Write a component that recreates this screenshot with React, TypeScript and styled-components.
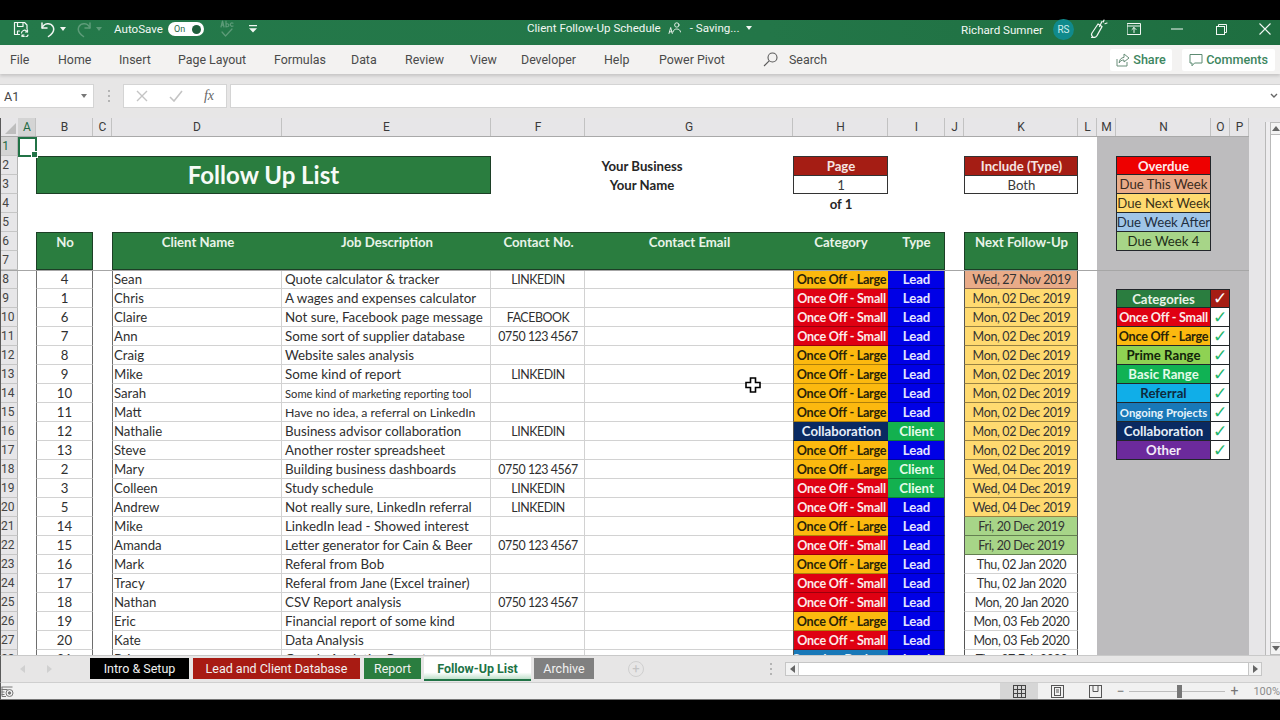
import React from "react";
import styled, { createGlobalStyle, css } from "styled-components";

const Global = createGlobalStyle`
  html, body { margin: 0; padding: 0; background: #000; }
  #root { width: 1280px; height: 720px; }
  * { box-sizing: border-box; }
`;

const CHROME = `Roboto, "Liberation Sans", sans-serif`;
const SHEET = `Lato, "Liberation Sans", sans-serif`;
const COLS = "17px 18px 57px 19px 170px 209px 94px 208px 95px 57px 19px 114px 19px 19px 95px 19px 19px";

const Window = styled.div`
  position: relative;
  width: 1280px;
  height: 720px;
  overflow: hidden;
  background: #000;
  display: flex;
  flex-direction: column;
  font-family: ${CHROME};
`;
const Letterbox = styled.div<{ $h: number }>`
  flex: 0 0 ${(p) => p.$h}px;
  background: #000;
`;

/* ---------- title bar ---------- */
const TitleBar = styled.header`
  flex: 0 0 25px;
  min-height: 0;
  display: flex;
  align-items: center;
  padding: 0 9px 7px 0;
  color: #f2f7f3;
  font-size: 11.6px;
  background: linear-gradient(90deg, #24794a 0%, #237648 60%, #1e6e40 100%);
`;
const TitleLeft = styled.div`
  flex: 0 0 527px;
  height: 18px;
  display: flex;
  align-items: center;
`;
const TitleMiddle = styled.div`
  display: flex;
  align-items: center;
  white-space: nowrap;
  transform: translateY(-1px);
`;
const TitleRight = styled.div`
  margin-left: auto;
  height: 18px;
  display: flex;
  align-items: center;
  white-space: nowrap;
`;
const UserName = styled.span`
  transform: translateY(1px);
`;
const Spot = styled.span<{ $ml: number; $w?: number; $faded?: boolean }>`
  display: inline-flex;
  align-items: center;
  margin-left: ${(p) => p.$ml}px;
  ${(p) => (p.$w ? `flex: 0 0 ${p.$w}px; width: ${p.$w}px;` : "")}
  opacity: ${(p) => (p.$faded ? 0.28 : 1)};
`;
const Toggle = styled.span`
  margin-left: 7px;
  width: 36px;
  height: 14px;
  border-radius: 7px;
  background: #fff;
  display: flex;
  align-items: center;
  justify-content: space-between;
  padding: 0 3px 0 6px;
  color: #2c6b48;
  font-size: 9px;
`;
const Knob = styled.span`
  width: 9px;
  height: 9px;
  border-radius: 50%;
  background: #1f5f3c;
`;
const Avatar = styled.span`
  flex: 0 0 21px;
  margin-left: 10px;
  width: 21px;
  height: 21px;
  border-radius: 50%;
  background: #108a8c;
  color: #cfeeee;
  font-size: 10px;
  display: flex;
  align-items: center;
  justify-content: center;
`;

/* ---------- ribbon tabs ---------- */
const Ribbon = styled.nav`
  flex: 0 0 29px;
  background: #f3f2f1;
  display: flex;
  align-items: center;
  padding-left: 10px;
  color: #4a4a4a;
  font-size: 12.4px;
  box-shadow: 0 2px 3px rgba(0, 0, 0, 0.15);
  z-index: 2;
`;
const RibbonTab = styled.span<{ $w: number }>`
  flex: 0 0 ${(p) => p.$w}px;
  white-space: nowrap;
`;
const SearchIcon = styled.span`
  display: flex;
  flex: 0 0 26px;
`;
const RibbonRight = styled.div`
  margin-left: auto;
  display: flex;
  gap: 10px;
  padding-right: 5px;
`;
const RibbonButton = styled.span<{ $w: number }>`
  width: ${(p) => p.$w}px;
  height: 22px;
  background: #fff;
  border-radius: 2px;
  display: flex;
  align-items: center;
  justify-content: center;
  gap: 3px;
  color: #3d8660;
  font-size: 12.6px;
  font-weight: 500;
`;

/* ---------- formula bar ---------- */
const FormulaBar = styled.div`
  flex: 0 0 44px;
  background: #e7e6e6;
  display: flex;
  align-items: center;
`;
const Field = styled.div`
  height: 24px;
  background: #fff;
  border: 1px solid #d4d4d4;
  display: flex;
  align-items: center;
  color: #444;
`;
const NameBox = styled(Field)`
  flex: 0 0 94px;
  justify-content: space-between;
  padding: 0 6px 0 4px;
  font-size: 12.5px;
  border-left: 0;
`;
const Grip = styled.span`
  flex: 0 0 29px;
  display: flex;
  justify-content: center;
`;
const FxBox = styled(Field)`
  flex: 0 0 104px;
  justify-content: space-between;
  padding: 0 12px;
`;
const FxText = styled.span`
  font-family: "Liberation Serif", serif;
  font-style: italic;
  font-size: 14px;
  color: #666;
`;
const FormulaInput = styled(Field)`
  margin-left: 3px;
  flex: 1;
  justify-content: flex-end;
  padding-right: 2px;
  border-right: 0;
`;

/* ---------- sheet ---------- */
const Body = styled.div`
  flex: 0 0 537px;
  display: flex;
  background: #e7e6e8;
  border-left: 1px solid #5a5a5a;
  overflow: hidden;
`;
const SheetColumn = styled.div`
  flex: 0 0 1248px;
  display: flex;
  flex-direction: column;
  min-height: 0;
`;
const ColHeaders = styled.div`
  flex: 0 0 19px;
  display: grid;
  grid-template-columns: ${COLS};
  background: #e7e6e8;
  border-bottom: 1px solid #a9a9a9;
`;
const ColHead = styled.div<{ $on?: boolean }>`
  display: flex;
  align-items: center;
  justify-content: center;
  padding-left: 1px;
  font-size: 12px;
  color: ${(p) => (p.$on ? "#1f6b43" : "#3a3a3a")};
  background: ${(p) => (p.$on ? "#d4d4d4" : "transparent")};
  border-right: 1px solid #c2c2c2;
`;
const Corner = styled.div`
  display: flex;
  align-items: flex-end;
  justify-content: flex-end;
  padding: 0 2px 2px 0;
`;
const Sheet = styled.div`
  flex: 1;
  min-height: 0;
  display: grid;
  grid-template-columns: ${COLS};
  grid-template-rows: repeat(28, 19px);
  background: #fff;
  overflow: hidden;
  font-family: ${SHEET};
  font-size: 13.2px;
  color: #2f2f2f;
`;
const at = css<{ $r: number; $c: number; $rs?: number; $cs?: number }>`
  grid-row: ${(p) => p.$r} / span ${(p) => p.$rs ?? 1};
  grid-column: ${(p) => p.$c} / span ${(p) => p.$cs ?? 1};
`;
type At = { $r: number; $c: number; $rs?: number; $cs?: number };

const RowHead = styled.div<{ $r: number; $on?: boolean }>`
  grid-row: ${(p) => p.$r};
  grid-column: 1;
  background: ${(p) => (p.$on ? "#d4d4d4" : "#e7e6e8")};
  border-bottom: 1px solid #c6c6c6;
  border-right: 1px solid #b4b4b4;
  font-family: ${CHROME};
  font-size: 12px;
  color: ${(p) => (p.$on ? "#1f6b43" : "#444")};
  line-height: 18px;
  text-align: center;
  padding-right: 7px;
  white-space: nowrap;
`;
const Selection = styled.div`
  grid-row: 1;
  grid-column: 2;
  position: relative;
  z-index: 2;
  margin: 0 -1px -1px 0;
  border: 2px solid #217346;
  &::after {
    content: "";
    position: absolute;
    right: -3px;
    bottom: -3px;
    width: 5px;
    height: 5px;
    background: #217346;
    border: 1px solid #fff;
  }
`;
const Panel = styled.div`
  grid-row: 1 / span 28;
  grid-column: 14 / span 4;
  background: #bdbcbe;
`;
const FreezeLine = styled.div`
  grid-row: 8;
  grid-column: 1 / -1;
  align-self: start;
  height: 1px;
  background: #a6a6a6;
  z-index: 3;
`;
const Banner = styled.div`
  grid-row: 2 / span 2;
  grid-column: 3 / span 4;
  background: #2a7d3f;
  border: 1px solid #1c3f26;
  color: #f7fbf7;
  font-size: 24px;
  font-weight: 700;
  display: flex;
  align-items: center;
  justify-content: center;
  z-index: 1;
  padding-bottom: 1px;
`;
const BusinessLine = styled.div<{ $r: number }>`
  grid-row: ${(p) => p.$r};
  grid-column: 7 / span 2;
  font-weight: 700;
  color: #262626;
  display: flex;
  align-items: center;
  justify-content: center;
`;
const BoxHead = styled.div<At>`
  ${at}
  background: #a51d14;
  color: #f6e4e2;
  font-weight: 700;
  border: 1px solid #333;
  border-bottom: 0;
  display: flex;
  align-items: center;
  justify-content: center;
  padding-left: 1px;
`;
const BoxValue = styled.div<At>`
  ${at}
  background: #fff;
  color: #3a3a3a;
  border: 1px solid #333;
  display: flex;
  align-items: center;
  justify-content: center;
  padding-left: 1px;
`;
const PageOf = styled.div`
  grid-row: 4;
  grid-column: 9;
  font-weight: 700;
  color: #262626;
  display: flex;
  align-items: center;
  justify-content: center;
  padding-left: 1px;
`;
const HeadCell = styled.div<At & { $left?: boolean; $right?: boolean }>`
  ${at}
  background: #2a7d3f;
  color: #e8f3e8;
  font-weight: 700;
  text-align: center;
  line-height: 18px;
  padding-left: 1px;
  border-top: 1px solid #1c3f26;
  border-bottom: 1px solid #1c3f26;
  border-left: ${(p) => (p.$left ? "1px solid #1c3f26" : "0")};
  border-right: ${(p) => (p.$right ? "1px solid #1c3f26" : "0")};
`;
const base = css<{ $r: number }>`
  grid-row: ${(p) => p.$r};
  display: flex;
  align-items: center;
  white-space: nowrap;
  overflow: hidden;
  border-bottom: 1px solid #d2d2d2;
`;
const NoCell = styled.div<{ $r: number }>`
  ${base}
  grid-column: 3;
  justify-content: center;
  border-left: 1px solid #6e6e6e;
  border-right: 1px solid #6e6e6e;
`;
const NameCell = styled.div<{ $r: number }>`
  ${base}
  grid-column: 5;
  padding-left: 1px;
  border-left: 1px solid #6e6e6e;
  border-right: 1px solid #d2d2d2;
`;
const JobCell = styled.div<{ $r: number; $size?: number }>`
  ${base}
  grid-column: 6;
  padding-left: 3px;
  border-right: 1px solid #d2d2d2;
  font-size: ${(p) => p.$size ?? 13.35}px;
`;
const ContactCell = styled.div<{ $r: number }>`
  ${base}
  grid-column: 7;
  justify-content: center;
  padding-left: 1px;
  font-size: 12.4px;
  letter-spacing: -0.45px;
  border-right: 1px solid #d2d2d2;
`;
const EmailCell = styled.div<{ $r: number }>`
  ${base}
  grid-column: 8;
`;
const fills: Record<string, { bg: string; fg: string }> = {
  small: { bg: "#df0012", fg: "#fbeaea" },
  large: { bg: "#fcb90f", fg: "#2a2408" },
  collab: { bg: "#0a2a62", fg: "#e6eef8" },
  ongoing: { bg: "#1878b8", fg: "#e6f3fb" },
  prime: { bg: "#8fd253", fg: "#12240a" },
  basic: { bg: "#10b254", fg: "#e4fbe9" },
  referral: { bg: "#10aee8", fg: "#0e2a3e" },
  other: { bg: "#6c2a9c", fg: "#f3eaf8" },
  lead: { bg: "#0000e6", fg: "#e6e6ff" },
  client: { bg: "#13b14f", fg: "#e4fbe9" },
};
const onceOff = css`
  font-size: 12.6px;
  letter-spacing: -0.25px;
`;
const FilledCell = styled.div<{ $r: number; $k: string }>`
  ${base}
  justify-content: center;
  padding-left: 1px;
  font-weight: 700;
  background: ${(p) => fills[p.$k].bg};
  color: ${(p) => fills[p.$k].fg};
  border-bottom: 1px solid rgba(0, 0, 0, 0.3);
  ${(p) => (p.$k === "small" || p.$k === "large" ? onceOff : "")}
`;
const CategoryCell = styled(FilledCell)`
  grid-column: 9;
  border-left: 1px solid #555;
`;
const TypeCell = styled(FilledCell)`
  grid-column: 10;
  border-right: 1px solid #555;
`;
const dateFill: Record<string, string> = {
  orange: "#e9ab88",
  yellow: "#ffda70",
  green: "#a7d588",
  white: "#ffffff",
};
const DateCell = styled.div<{ $r: number; $k: string }>`
  ${base}
  grid-column: 12;
  justify-content: center;
  padding-left: 1px;
  font-size: 12.5px;
  letter-spacing: -0.35px;
  background: ${(p) => dateFill[p.$k]};
  color: #333;
  border-left: 1px solid #555;
  border-right: 1px solid #555;
  border-bottom: 1px solid ${(p) => (p.$k === "white" ? "#d2d2d2" : "rgba(0,0,0,.4)")};
`;
const LegendCell = styled.div<{ $r: number; $bg: string; $fg: string; $bold?: boolean; $k?: string; $head?: boolean }>`
  grid-row: ${(p) => p.$r};
  grid-column: 15;
  z-index: 1;
  background: ${(p) => p.$bg};
  color: ${(p) => p.$fg};
  font-weight: ${(p) => (p.$bold ? 700 : 400)};
  white-space: nowrap;
  display: flex;
  align-items: center;
  justify-content: center;
  border: 1px solid #22262a;
  border-top: ${(p) => (p.$head ? "1px solid #22262a" : "0")};
  ${(p) => (p.$k === "small" || p.$k === "large" ? onceOff : "")}
  ${(p) => (p.$k === "ongoing" ? "font-size: 11.4px;" : "")}
`;
const TickCell = styled.div<{ $r: number; $head?: boolean }>`
  grid-row: ${(p) => p.$r};
  grid-column: 16;
  z-index: 1;
  background: ${(p) => (p.$head ? "#a51d14" : "#fff")};
  color: ${(p) => (p.$head ? "#fff" : "#1fb56d")};
  font-family: "DejaVu Sans", sans-serif;
  font-size: 17px;
  font-weight: 700;
  line-height: 1;
  display: flex;
  align-items: center;
  justify-content: center;
  overflow: hidden;
  border-right: 1px solid #22262a;
  border-bottom: 1px solid #22262a;
  border-top: ${(p) => (p.$head ? "1px solid #22262a" : "0")};
`;

/* ---------- vertical scrollbar ---------- */
const VScroll = styled.div`
  flex: 1;
  padding: 4px 0 0 17px;
  display: flex;
  flex-direction: column;
  background: #e7e6e8;
`;
const VTrack = styled.div`
  flex: 1;
  margin-left: 4px;
  background: #fff;
  border-left: 1px solid #b9b9b9;
  box-shadow: -4px 0 0 #eeedef, -5px 0 0 #b9b9b9;
  display: flex;
  flex-direction: column;
  justify-content: space-between;
  align-items: center;
`;
const VArrow = styled.div`
  width: 100%;
  height: 13px;
  background: #f3f3f3;
  border-bottom: 1px solid #bbb;
  border-top: 1px solid #bbb;
  display: flex;
  align-items: center;
  justify-content: center;
`;

/* ---------- sheet tabs ---------- */
const TabBar = styled.div`
  flex: 0 0 27px;
  display: flex;
  align-items: center;
  background: #e7e6e6;
  border-top: 1px solid #c9c9c9;
  border-left: 1px solid #5a5a5a;
  padding: 0 0 1px 19px;
`;
const NavArrow = styled.span<{ $w: number }>`
  flex: 0 0 ${(p) => p.$w}px;
  display: flex;
`;
const Tab = styled.span<{ $w: number; $bg: string }>`
  flex: 0 0 ${(p) => p.$w}px;
  height: 21px;
  margin-right: 4px;
  background: ${(p) => p.$bg};
  color: #f1f1f1;
  font-size: 12.5px;
  display: flex;
  align-items: center;
  justify-content: center;
  white-space: nowrap;
`;
const ActiveTab = styled.span`
  flex: 0 0 107px;
  height: 24px;
  margin: 1px 3px 0 -1px;
  background: linear-gradient(180deg, #fff 70%, #bfe0cb 100%);
  border-bottom: 2px solid #217346;
  color: #217346;
  font-weight: 700;
  font-size: 12.5px;
  display: flex;
  align-items: center;
  justify-content: center;
  white-space: nowrap;
`;
const AddSheet = styled.span`
  margin-left: 30px;
  width: 16px;
  height: 16px;
  border-radius: 50%;
  border: 1px solid #cfcfcf;
  color: #c4c4c4;
  font-size: 13px;
  line-height: 13px;
  text-align: center;
`;
const TabGrip = styled.span`
  margin-left: 126px;
  width: 15px;
  display: flex;
`;
const HScroll = styled.div`
  flex: 0 0 477px;
  height: 14px;
  display: flex;
  background: #fff;
  border: 1px solid #c6c6c6;
`;
const HButton = styled.span`
  flex: 0 0 12px;
  background: #f3f3f3;
  display: flex;
  align-items: center;
  justify-content: center;
`;
const HTrack = styled.span`
  flex: 1;
  background: #fff;
  border-left: 1px solid #c6c6c6;
  border-right: 1px solid #c6c6c6;
`;

/* ---------- status bar ---------- */
const StatusBar = styled.footer`
  flex: 0 0 17px;
  display: flex;
  align-items: center;
  background: #f1f1f1;
  border-top: 1px solid #cfcfcf;
  border-left: 1px solid #5a5a5a;
  border-bottom: 1px solid #777;
  color: #8c8c8c;
  font-size: 11px;
`;
const ViewGroup = styled.div`
  margin-left: auto;
  display: flex;
  align-items: center;
  height: 100%;
`;
const ViewButton = styled.span<{ $on?: boolean }>`
  flex: 0 0 38px;
  height: 100%;
  display: flex;
  align-items: center;
  justify-content: center;
  background: ${(p) => (p.$on ? "#d6d6d6" : "transparent")};
`;
const Zoom = styled.div`
  margin-left: 1px;
  display: flex;
  align-items: center;
  gap: 4px;
  white-space: nowrap;
`;
const Slider = styled.span`
  position: relative;
  display: block;
  width: 96px;
  height: 1px;
  background: #bdbdbd;
  &::after {
    content: "";
    position: absolute;
    left: 48px;
    top: -6px;
    width: 5px;
    height: 13px;
    background: #777;
  }
`;
const ZoomSign = styled.span`
  font-size: 14px;
  color: #777;
  width: 10px;
  text-align: center;
`;
const Percent = styled.span`
  margin-left: 10px;
  flex: 0 0 24px;
`;
const MousePointer = styled.svg`
  position: absolute;
  left: 745px;
  top: 377px;
  z-index: 5;
`;

/* ---------- icons ---------- */
const I = { fill: "none", stroke: "currentColor", strokeWidth: 1.2, strokeLinecap: "round" as const, strokeLinejoin: "round" as const };
const SaveIcon = () => (
  <svg width="16" height="16" viewBox="0 0 16 16" {...I}>
    <path d="M1.5 1.5h10l2.5 2.5v4M1.5 1.5v12h5" />
    <path d="M4.5 1.5v4h5.5v-4M4.5 13v-3h2" />
    <path d="M8.5 12a3 3 0 0 1 5-2l1 1M15 14a3 3 0 0 1-5 1.2l-1-1M14.5 8.8V11h-2M9 16v-2h2" />
  </svg>
);
const UndoIcon = () => (
  <svg width="16" height="17" viewBox="0 0 16 17" fill="none" stroke="currentColor" strokeWidth="1.5" strokeLinecap="round" strokeLinejoin="round">
    <path d="M2 2v5h5" />
    <path d="M2.3 6.8A6 6 0 0 1 13 5.5c1.6 3-.3 7-4.5 10" />
  </svg>
);
const RedoIcon = () => (
  <svg width="16" height="17" viewBox="0 0 16 17" fill="none" stroke="currentColor" strokeWidth="1.5" strokeLinecap="round" strokeLinejoin="round">
    <path d="M14 2v5H9" />
    <path d="M13.7 6.8A6 6 0 0 0 3 5.5c-1.6 3 .3 7 4.5 10" />
  </svg>
);
const Caret = ({ color = "currentColor" }: { color?: string }) => (
  <svg width="6" height="4" viewBox="0 0 6 4"><path d="M0 0h6L3 4z" fill={color} /></svg>
);
const AbcIcon = () => (
  <svg width="14" height="20" viewBox="0 0 14 20" {...I}>
    <path d="M1 8l1.5-6 1.5 6M1.5 6.2h2M6 2v6M6 5.5a1.5 1.5 0 1 1 0 1.5M13 4.2a1.7 1.7 0 1 0 0 2.8" />
    <path d="M2 13l3.5 4L12 10" />
  </svg>
);
const CustomizeIcon = () => (
  <svg width="8" height="8" viewBox="0 0 8 8"><path d="M0 0h8v1.2H0zM0 3.2h8L4 7.5z" fill="currentColor" /></svg>
);
const PersonIcon = () => (
  <svg width="13" height="13" viewBox="0 0 13 13" {...I} strokeWidth={0.9}>
    <circle cx="8.8" cy="3" r="2.2" />
    <path d="M5 10c.4-2 1.8-3 3.8-3s3.4 1 3.8 3M4.3 11.5 2.7 5.5 1 11.5M1.5 9.8h2.5" />
  </svg>
);
const PenIcon = () => (
  <svg width="18" height="20" viewBox="0 0 18 20" {...I}>
    <path d="M3 18c-1.5-1-1.8-2.6-1-4l6-9 4 2.6-5 9c-1 1.5-2.6 2.2-4 1.4z" />
    <path d="M9.5 7.5l2.5-5M14 1l-.7 2M17 4l-2 .7M1.5 18.5h3" />
  </svg>
);
const RibbonIcon = () => (
  <svg width="14" height="12" viewBox="0 0 14 12" {...I} strokeWidth={1}>
    <rect x="0.5" y="0.5" width="13" height="11" />
    <path d="M0.5 3h13M7 9.5V4.5M5 6.5l2-2 2 2" />
  </svg>
);
const MinIcon = () => (
  <svg width="12" height="2" viewBox="0 0 12 2"><path d="M0 1h12" stroke="currentColor" /></svg>
);
const RestoreIcon = () => (
  <svg width="11" height="11" viewBox="0 0 11 11" fill="none" stroke="currentColor">
    <rect x="0.5" y="2.5" width="8" height="8" />
    <path d="M2.5 2.5v-2h8v8h-2" />
  </svg>
);
const CloseIcon = () => (
  <svg width="12" height="12" viewBox="0 0 12 12"><path d="M.5.5l11 11M11.5.5l-11 11" stroke="currentColor" strokeWidth="1.1" /></svg>
);
const SearchGlyph = () => (
  <svg width="15" height="15" viewBox="0 0 15 15" fill="none" stroke="#5a5a5a" strokeWidth="1.1">
    <circle cx="9.5" cy="5.5" r="4.5" />
    <path d="M6.2 8.8 1 14" />
  </svg>
);
const ShareIcon = () => (
  <svg width="14" height="14" viewBox="0 0 14 14" fill="none" stroke="#6a8f7b" strokeWidth="1">
    <path d="M1 6v7h10V9" />
    <path d="M8 1l5 4-5 4V7C5.5 7 4 8 3.2 10c0-3.2 1.8-5.3 4.8-5.6z" />
  </svg>
);
const CommentIcon = () => (
  <svg width="14" height="14" viewBox="0 0 14 14" fill="none" stroke="#5c8b72" strokeWidth="1">
    <path d="M1 1.5h12v8.5H5.5L3 12.8V10H1z" />
  </svg>
);
const XIcon = () => (
  <svg width="12" height="12" viewBox="0 0 12 12"><path d="M1 1l10 10M11 1 1 11" stroke="#c4c4c4" strokeWidth="1.4" /></svg>
);
const CheckIcon = () => (
  <svg width="14" height="12" viewBox="0 0 14 12"><path d="M1 7l4 4L13 1" fill="none" stroke="#c4c4c4" strokeWidth="1.6" /></svg>
);
const Chevron = () => (
  <svg width="8" height="6" viewBox="0 0 8 6"><path d="M1 1l3 3 3-3" fill="none" stroke="#666" strokeWidth="1.4" /></svg>
);
const DotsIcon = () => (
  <svg width="2" height="12" viewBox="0 0 2 12"><path d="M0 0h2v2H0zM0 5h2v2H0zM0 10h2v2H0z" fill="#b4b4b4" /></svg>
);
const Tri = ({ dir, color = "#666" }: { dir: "u" | "d" | "l" | "r"; color?: string }) => {
  const d = { u: "M0 5 4 0l4 5z", d: "M0 0h8L4 5z", l: "M5 0v8L0 4z", r: "M0 0v8l5-4z" }[dir];
  const box = dir === "u" || dir === "d" ? [8, 5] : [5, 8];
  return <svg width={box[0]} height={box[1]} viewBox={`0 0 ${box[0]} ${box[1]}`}><path d={d} fill={color} /></svg>;
};
const GridIcon = () => (
  <svg width="13" height="13" viewBox="0 0 13 13" fill="none" stroke="#444" strokeWidth="1">
    <rect x=".5" y=".5" width="12" height="12" />
    <path d="M4.5 .5v12M8.5 .5v12M.5 4.5h12M.5 8.5h12" />
  </svg>
);
const PageIcon = () => (
  <svg width="13" height="13" viewBox="0 0 13 13" fill="none" stroke="#555" strokeWidth="1">
    <rect x=".5" y=".5" width="12" height="12" />
    <rect x="3.5" y="2.5" width="6" height="8" />
    <path d="M5 5h3M5 7h3" />
  </svg>
);
const BreakIcon = () => (
  <svg width="13" height="13" viewBox="0 0 13 13" fill="none" stroke="#555" strokeWidth="1">
    <rect x=".5" y=".5" width="12" height="12" />
    <path d="M4 .5v6h5v-6" />
  </svg>
);
const MacroIcon = () => (
  <svg width="13" height="11" viewBox="0 0 13 11" fill="none" stroke="#777" strokeWidth="1">
    <path d="M.5 1h11M.5 3.5h6M.5 6h3M.5 8.5h3M1 1v9.5h4" />
    <circle cx="8.5" cy="7" r="3.5" />
    <circle cx="8.5" cy="7" r="1.2" fill="#777" />
  </svg>
);

/* ---------- data ---------- */
const colLetters = "A B C D E F G H I J K L M N O P".split(" ");
const tabs = ["File", "Home", "Insert", "Page Layout", "Formulas", "Data", "Review", "View", "Developer", "Help", "Power Pivot"];
const tabWidths = [48, 61, 59, 96, 77, 54, 65, 51, 83, 55, 104];

type Row = [string, string, string, string, string, string, string, string];
const D1 = "Mon, 02 Dec 2019";
const D2 = "Wed, 04 Dec 2019";
const P = "0750 123 4567";
const L = "LINKEDIN";
const rows: Row[] = [
  ["4", "Sean", "Quote calculator & tracker", L, "large", "lead", "Wed, 27 Nov 2019", "orange"],
  ["1", "Chris", "A wages and expenses calculator", "", "small", "lead", D1, "yellow"],
  ["6", "Claire", "Not sure, Facebook page message", "FACEBOOK", "small", "lead", D1, "yellow"],
  ["7", "Ann", "Some sort of supplier database", P, "small", "lead", D1, "yellow"],
  ["8", "Craig", "Website sales analysis", "", "large", "lead", D1, "yellow"],
  ["9", "Mike", "Some kind of report", L, "large", "lead", D1, "yellow"],
  ["10", "Sarah", "Some kind of marketing reporting tool", "", "large", "lead", D1, "yellow"],
  ["11", "Matt", "Have no idea, a referral on LinkedIn", "", "large", "lead", D1, "yellow"],
  ["12", "Nathalie", "Business advisor collaboration", L, "collab", "client", D1, "yellow"],
  ["13", "Steve", "Another roster spreadsheet", "", "large", "lead", D1, "yellow"],
  ["2", "Mary", "Building business dashboards", P, "large", "client", D2, "yellow"],
  ["3", "Colleen", "Study schedule", L, "small", "client", D2, "yellow"],
  ["5", "Andrew", "Not really sure, LinkedIn referral", L, "small", "lead", D2, "yellow"],
  ["14", "Mike", "LinkedIn lead - Showed interest", "", "large", "lead", "Fri, 20 Dec 2019", "green"],
  ["15", "Amanda", "Letter generator for Cain & Beer", P, "small", "lead", "Fri, 20 Dec 2019", "green"],
  ["16", "Mark", "Referal from Bob", "", "large", "lead", "Thu, 02 Jan 2020", "white"],
  ["17", "Tracy", "Referal from Jane (Excel trainer)", "", "small", "lead", "Thu, 02 Jan 2020", "white"],
  ["18", "Nathan", "CSV Report analysis", P, "small", "lead", "Mon, 20 Jan 2020", "white"],
  ["19", "Eric", "Financial report of some kind", "", "large", "lead", "Mon, 03 Feb 2020", "white"],
  ["20", "Kate", "Data Analysis", "", "small", "lead", "Mon, 03 Feb 2020", "white"],
  ["21", "Brian", "Google Analytics Report", "", "ongoing", "lead", "Thu, 27 Feb 2020", "white"],
];
const jobSize: Record<string, number> = {
  "Some kind of marketing reporting tool": 11.2,
  "Have no idea, a referral on LinkedIn": 12.3,
};
const catLabel: Record<string, string> = {
  large: "Once Off - Large",
  small: "Once Off - Small",
  collab: "Collaboration",
  ongoing: "Ongoing Projects",
};
const dueLegend = [
  ["Overdue", "#ee0000", "#fdeaea", true],
  ["Due This Week", "#e9ab88", "#3a2a20", false],
  ["Due Next Week", "#ffda70", "#3a3218", false],
  ["Due Week After", "#9fc5e8", "#1e2e40", false],
  ["Due Week 4", "#a7d588", "#1f3018", false],
] as const;
const catLegend = [
  ["Once Off - Small", "small"],
  ["Once Off - Large", "large"],
  ["Prime Range", "prime"],
  ["Basic Range", "basic"],
  ["Referral", "referral"],
  ["Ongoing Projects", "ongoing"],
  ["Collaboration", "collab"],
  ["Other", "other"],
] as const;
const headers: [string, number, boolean, boolean][] = [
  ["Client Name", 5, true, false],
  ["Job Description", 6, false, false],
  ["Contact No.", 7, false, false],
  ["Contact Email", 8, false, false],
  ["Category", 9, false, false],
  ["Type", 10, false, true],
];

export default function App() {
  return (
    <Window>
      <Global />
      <Letterbox $h={20} />
      <TitleBar>
        <TitleLeft>
          <Spot $ml={13}><SaveIcon /></Spot>
          <Spot $ml={11}><UndoIcon /></Spot>
          <Spot $ml={4}><Caret /></Spot>
          <Spot $ml={10} $faded><RedoIcon /></Spot>
          <Spot $ml={4} $faded><Caret /></Spot>
          <Spot $ml={12} $w={47}>AutoSave</Spot>
          <Toggle>On<Knob /></Toggle>
          <Spot $ml={16} $faded><AbcIcon /></Spot>
          <Spot $ml={15}><CustomizeIcon /></Spot>
        </TitleLeft>
        <TitleMiddle>
          Client Follow-Up Schedule
          <Spot $ml={7}><PersonIcon /></Spot>
          <Spot $ml={9}>- Saving...</Spot>
          <Spot $ml={7}><Caret /></Spot>
        </TitleMiddle>
        <TitleRight>
          <UserName>Richard Sumner</UserName>
          <Avatar>RS</Avatar>
          <Spot $ml={16}><PenIcon /></Spot>
          <Spot $ml={19}><RibbonIcon /></Spot>
          <Spot $ml={30}><MinIcon /></Spot>
          <Spot $ml={33}><RestoreIcon /></Spot>
          <Spot $ml={32}><CloseIcon /></Spot>
        </TitleRight>
      </TitleBar>

      <Ribbon>
        {tabs.map((t, i) => (
          <RibbonTab key={t} $w={tabWidths[i]}>{t}</RibbonTab>
        ))}
        <SearchIcon><SearchGlyph /></SearchIcon>
        <span>Search</span>
        <RibbonRight>
          <RibbonButton $w={62}><ShareIcon />Share</RibbonButton>
          <RibbonButton $w={93}><CommentIcon />Comments</RibbonButton>
        </RibbonRight>
      </Ribbon>

      <FormulaBar>
        <NameBox>A1<Caret color="#777" /></NameBox>
        <Grip><DotsIcon /></Grip>
        <FxBox>
          <XIcon />
          <CheckIcon />
          <FxText>fx</FxText>
        </FxBox>
        <FormulaInput><Chevron /></FormulaInput>
      </FormulaBar>

      <Body>
        <SheetColumn>
          <ColHeaders>
            <Corner>
              <svg width="11" height="11" viewBox="0 0 11 11"><path d="M11 0v11H0z" fill="#bdbdbd" /></svg>
            </Corner>
            {colLetters.map((c) => (
              <ColHead key={c} $on={c === "A"}>{c}</ColHead>
            ))}
          </ColHeaders>
          <Sheet>
            {Array.from({ length: 28 }, (_, i) => (
              <RowHead key={i} $r={i + 1} $on={i === 0}>{i + 1}</RowHead>
            ))}
            <Panel />
            <Selection />
            <Banner>Follow Up List</Banner>
            <BusinessLine $r={2}>Your Business</BusinessLine>
            <BusinessLine $r={3}>Your Name</BusinessLine>
            <BoxHead $r={2} $c={9}>Page</BoxHead>
            <BoxValue $r={3} $c={9}>1</BoxValue>
            <PageOf>of 1</PageOf>
            <BoxHead $r={2} $c={12}>Include (Type)</BoxHead>
            <BoxValue $r={3} $c={12}>Both</BoxValue>

            <HeadCell $r={6} $rs={2} $c={3} $left $right>No</HeadCell>
            {headers.map(([t, c, l, r]) => (
              <HeadCell key={t} $r={6} $rs={2} $c={c} $left={l} $right={r}>{t}</HeadCell>
            ))}
            <HeadCell $r={6} $rs={2} $c={12} $left $right>Next Follow-Up</HeadCell>

            {rows.map(([no, name, job, contact, cat, type, date, dk], i) => {
              const r = i + 8;
              return (
                <React.Fragment key={r}>
                  <NoCell $r={r}>{no}</NoCell>
                  <NameCell $r={r}>{name}</NameCell>
                  <JobCell $r={r} $size={jobSize[job]}>{job}</JobCell>
                  <ContactCell $r={r}>{contact}</ContactCell>
                  <EmailCell $r={r} />
                  <CategoryCell $r={r} $k={cat}>{catLabel[cat]}</CategoryCell>
                  <TypeCell $r={r} $k={type}>{type === "lead" ? "Lead" : "Client"}</TypeCell>
                  <DateCell $r={r} $k={dk}>{date}</DateCell>
                </React.Fragment>
              );
            })}

            {dueLegend.map(([t, bg, fg, bold], i) => (
              <LegendCell key={t} $r={i + 2} $bg={bg} $fg={fg} $bold={bold} $head={i === 0}>{t}</LegendCell>
            ))}
            <LegendCell $r={9} $bg="#2a7d3f" $fg="#e8f3e8" $bold $head>Categories</LegendCell>
            <TickCell $r={9} $head>✓</TickCell>
            {catLegend.map(([t, k], i) => (
              <React.Fragment key={t}>
                <LegendCell $r={i + 10} $bg={fills[k].bg} $fg={fills[k].fg} $bold $k={k}>{t}</LegendCell>
                <TickCell $r={i + 10}>✓</TickCell>
              </React.Fragment>
            ))}
            <FreezeLine />
          </Sheet>
        </SheetColumn>
        <VScroll>
          <VTrack>
            <VArrow><Tri dir="u" /></VArrow>
            <VArrow><Tri dir="d" /></VArrow>
          </VTrack>
        </VScroll>
      </Body>

      <TabBar>
        <NavArrow $w={27}><Tri dir="l" color="#d0d0d0" /></NavArrow>
        <NavArrow $w={43}><Tri dir="r" color="#d0d0d0" /></NavArrow>
        <Tab $w={99} $bg="#000">Intro &amp; Setup</Tab>
        <Tab $w={167} $bg="#a81b13">Lead and Client Database</Tab>
        <Tab $w={57} $bg="#2a7d3f">Report</Tab>
        <ActiveTab>Follow-Up List</ActiveTab>
        <Tab $w={60} $bg="#808080">Archive</Tab>
        <AddSheet>+</AddSheet>
        <TabGrip><DotsIcon /></TabGrip>
        <HScroll>
          <HButton><Tri dir="l" /></HButton>
          <HTrack />
          <HButton><Tri dir="r" /></HButton>
        </HScroll>
      </TabBar>

      <StatusBar>
        <MacroIcon />
        <ViewGroup>
          <ViewButton $on><GridIcon /></ViewButton>
          <ViewButton><PageIcon /></ViewButton>
          <ViewButton><BreakIcon /></ViewButton>
        </ViewGroup>
        <Zoom>
          <ZoomSign>−</ZoomSign>
          <Slider />
          <ZoomSign>+</ZoomSign>
          <Percent>100%</Percent>
        </Zoom>
      </StatusBar>
      <Letterbox $h={21} />

      <MousePointer width="16" height="16" viewBox="0 0 16 16">
        <path d="M5.5 1h5v4.5H15v5h-4.5V15h-5v-4.5H1v-5h4.5z" fill="#fff" stroke="#000" strokeWidth="1.6" />
      </MousePointer>
    </Window>
  );
}
